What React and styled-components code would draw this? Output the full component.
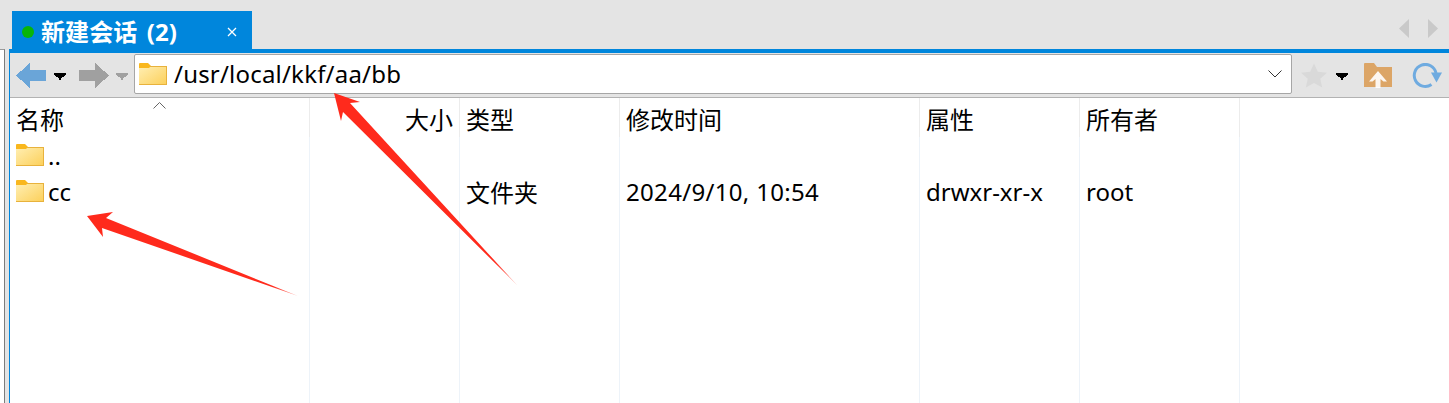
import React from 'react'
import styled, { createGlobalStyle } from 'styled-components'

const FONT = `"Noto Sans", "Noto Sans CJK SC", sans-serif`
const BLUE = '#0086dc'
const CHROME = '#e4e4e4'

const GlobalStyle = createGlobalStyle`
  html, body { margin: 0; padding: 0; background: #fff; }
  body { font-family: ${FONT}; color: #000; }
`

const Page = styled.div`
  position: relative;
  width: 1449px;
  height: 403px;
  overflow: hidden;
  display: flex;
  flex-direction: column;
`

const TabBar = styled.div`
  height: 49px;
  flex: none;
  background: ${CHROME};
  display: flex;
  align-items: flex-end;
  justify-content: space-between;
  padding-left: 12px;
  box-sizing: border-box;
`

const Tab = styled.div`
  width: 240px;
  height: 38px;
  background: ${BLUE};
  color: #fff;
  display: flex;
  align-items: center;
  box-sizing: border-box;
  padding: 4px 0 0 10px;
`

const StatusDot = styled.span`
  width: 12px;
  height: 12px;
  border-radius: 50%;
  background: #08b508;
  flex: none;
`

const TabTitle = styled.span`
  margin-left: 7px;
  font-size: 24px;
  font-weight: 700;
  line-height: 34px;
  word-spacing: 3px;
  letter-spacing: 0.1px;
  white-space: nowrap;
  flex: 1;
`

const TabClose = styled.svg`
  width: 10px;
  height: 10px;
  margin-right: 15px;
  flex: none;
`

const TabScroll = styled.div`
  display: flex;
  gap: 19px;
  padding: 0 11px 11px 0;
  filter: blur(0.4px);
`

const Body = styled.div`
  flex: 1;
  display: flex;
  min-height: 0;
`

const SidePane = styled.div`
  width: 4px;
  background: #fff;
  border-top: 1px solid #9a9a9a;
  border-right: 1px solid #7c7c7c;
  flex: none;
`

const Gutter = styled.div`
  width: 4px;
  background: ${CHROME};
  flex: none;
`

const Main = styled.div`
  flex: 1;
  display: flex;
  flex-direction: column;
  border-left: 1px solid ${BLUE};
  border-top: 4px solid ${BLUE};
  min-width: 0;
`

const Toolbar = styled.div`
  height: 45px;
  flex: none;
  box-sizing: border-box;
  background: ${CHROME};
  border-bottom: 1px solid #b2b2b2;
  display: flex;
  align-items: flex-start;
  padding: 1px 7px 0 6px;
`

const ToolIcon = styled.svg`
  flex: none;
  margin-left: ${(p) => p.$gap || 0}px;
  margin-top: ${(p) => p.$top || 0}px;
  filter: ${(p) => (p.$soft ? 'blur(0.5px)' : 'none')};
`

const AddressBox = styled.div`
  flex: 1;
  margin-left: 6px;
  height: 40px;
  box-sizing: border-box;
  background: #fff;
  border: 1px solid #a6a6a6;
  border-radius: 2px;
  display: flex;
  align-items: center;
  padding: 0 9px 0 4px;
`

const AddressText = styled.span`
  flex: 1;
  margin-left: 7px;
  font-size: 24px;
  letter-spacing: 0.2px;
  line-height: 38px;
  white-space: nowrap;
`

const FileList = styled.div`
  flex: 1;
  display: flex;
  background: #fff;
  min-height: 0;
`

const Column = styled.div`
  position: relative;
  width: ${(p) => p.$width}px;
  flex: none;
  box-sizing: border-box;
  border-right: 1px solid #edf3f9;
`

const HeaderCell = styled.div`
  height: 39px;
  box-sizing: border-box;
  margin-right: -1px;
  padding: 3px 6px 0;
  border-right: 1px solid #ececec;
  font-size: 24px;
  line-height: 38px;
  white-space: nowrap;
  text-align: ${(p) => (p.$right ? 'right' : 'left')};
`

const Cell = styled.div`
  height: 36px;
  box-sizing: border-box;
  padding: 0 6px;
  display: flex;
  align-items: center;
  gap: 4px;
  font-size: 24px;
  letter-spacing: ${(p) => p.$spacing || 0}px;
  white-space: nowrap;
`

const SortMark = styled.svg`
  position: absolute;
  left: 143px;
  top: 4px;
`

const Overlay = styled.svg`
  position: absolute;
  left: 0;
  top: 0;
  pointer-events: none;
`

let folderId = 0

function Folder({ $gap, $top }) {
  const id = `folder-${folderId++}`
  return (
    <ToolIcon $gap={$gap} $top={$top} width="28" height="22" viewBox="0 0 28 22">
      <defs>
        <linearGradient id={id} x1="0" y1="0" x2="1" y2="1">
          <stop offset="0" stopColor="#ffefb4" />
          <stop offset="1" stopColor="#fccf58" />
        </linearGradient>
      </defs>
      <path d="M1 0h8l3 3v2H0V1a1 1 0 0 1 1-1z" fill="#f9b71d" />
      <path d="M0 5l10 0 2-2h16v19H0z" fill={`url(#${id})`} />
      <path d="M11 3.5h17M0 21.5h28M27.5 3v19" stroke="#e8b23c" fill="none" />
    </ToolIcon>
  )
}

function Caret({ color, $gap, $top }) {
  return (
    <ToolIcon $gap={$gap} $top={$top} width="12" height="7" viewBox="0 0 12 7" shapeRendering="crispEdges">
      <path d="M0 0h12v2h-1v1h-1v1H8v1H7v2H5V5H4V4H2V3H1V2H0z" fill={color} />
    </ToolIcon>
  )
}

function ArrowHead({ color, flip, $gap }) {
  return (
    <ToolIcon $gap={$gap} $top={9} width="30" height="25" viewBox="0 0 30 25" shapeRendering="crispEdges">
      <path
        d={flip ? 'M0 7h16V0l14 12.5L16 25v-7H0z' : 'M30 7H14V0L0 12.5 14 25v-7h16z'}
        fill={color}
      />
    </ToolIcon>
  )
}

export default function App() {
  const columns = [
    { width: 300, title: '名称', sort: true, cells: [{ folder: true, text: '..' }, { folder: true, text: 'cc' }] },
    { width: 150, title: '大小', right: true, cells: [] },
    { width: 160, title: '类型', cells: [{ text: '' }, { text: '文件夹' }] },
    { width: 300, title: '修改时间', cells: [{ text: '' }, { text: '2024/9/10, 10:54', spacing: 0.32 }] },
    { width: 160, title: '属性', cells: [{ text: '' }, { text: 'drwxr-xr-x' }] },
    { width: 160, title: '所有者', cells: [{ text: '' }, { text: 'root' }] },
  ]

  return (
    <Page>
      <GlobalStyle />
      <TabBar>
        <Tab>
          <StatusDot />
          <TabTitle>新建会话 (2)</TabTitle>
          <TabClose viewBox="0 0 10 10">
            <path d="M1 1l8 8M9 1l-8 8" stroke="#fff" strokeWidth="1.3" />
          </TabClose>
        </Tab>
        <TabScroll>
          <svg width="10" height="19" viewBox="0 0 10 19">
            <path d="M10 0v19L0 9.5z" fill="#c9c9c9" />
          </svg>
          <svg width="10" height="19" viewBox="0 0 10 19">
            <path d="M0 0v19l10-9.5z" fill="#c9c9c9" />
          </svg>
        </TabScroll>
      </TabBar>
      <Body>
        <SidePane />
        <Gutter />
        <Main>
          <Toolbar>
            <ArrowHead color="#6aa5d8" />
            <Caret color="#000" $gap={8} $top={19} />
            <ArrowHead color="#a0a0a0" flip $gap={13} />
            <Caret color="#a0a0a0" $gap={7} $top={19} />
            <AddressBox>
              <Folder />
              <AddressText>/usr/local/kkf/aa/bb</AddressText>
              <svg width="14" height="8" viewBox="0 0 14 8">
                <path d="M.5.5L7 7l6.5-6.5" stroke="#333" fill="none" />
              </svg>
            </AddressBox>
            <ToolIcon $soft $gap={9} $top={9} width="26" height="25" viewBox="0 0 27 25">
              <path d="M13.5 0l4 8.6 9.5 1-7 6.3 2 9.1-8.500-4.800L5 25l2-9.100-7-6.300 9.500-1z" fill="#d9d9d9" />
            </ToolIcon>
            <Caret color="#000" $gap={9} $top={19} />
            <ToolIcon $soft $gap={16} $top={9} width="28" height="25" viewBox="0 0 28 25">
              <path d="M0 1a1 1 0 0 1 1-1h9l3 4h15v20H0z" fill="#dca566" />
              <path d="M14 8l9 10.500h-3.500L16.500 16v9h-5v-9l-3 2.500H5z" fill="#fff" fillOpacity=".9" />
            </ToolIcon>
            <ToolIcon $soft $gap={20} $top={9} width="30" height="25" viewBox="0 0 30 25">
              <path d="M24 10A11 11 0 1 0 19.500 21.500" stroke="#6fabe0" strokeWidth="3" fill="none" />
              <path d="M19 9.500h11l-5.500 10z" fill="#6fabe0" />
            </ToolIcon>
          </Toolbar>
          <FileList>
            {columns.map((col) => (
              <Column key={col.title} $width={col.width}>
                <HeaderCell $right={col.right}>{col.title}</HeaderCell>
                {col.sort && (
                  <SortMark width="13" height="7" viewBox="0 0 13 7">
                    <path d="M.5 6.500l6-6 6 6" stroke="#666" fill="none" />
                  </SortMark>
                )}
                {col.cells.map((cell, i) => (
                  <Cell key={i} $spacing={cell.spacing}>
                    {cell.folder && <Folder />}
                    <span>{cell.text}</span>
                  </Cell>
                ))}
              </Column>
            ))}
          </FileList>
        </Main>
      </Body>
      <Overlay width="1449" height="403" viewBox="0 0 1449 403">
        <defs>
          <linearGradient id="arrow-left" gradientUnits="userSpaceOnUse" x1="87" y1="216" x2="298" y2="296">
            <stop offset="0" stopColor="#ff2a1c" />
            <stop offset=".88" stopColor="#ff2a1c" />
            <stop offset="1" stopColor="#ffa098" />
          </linearGradient>
          <linearGradient id="arrow-up" gradientUnits="userSpaceOnUse" x1="334" y1="93" x2="517" y2="285">
            <stop offset="0" stopColor="#ff2a1c" />
            <stop offset=".88" stopColor="#ff2a1c" />
            <stop offset="1" stopColor="#ffa098" />
          </linearGradient>
        </defs>
        <polygon points="87,216 113,212 106,218 298,296 102,228 103,237" fill="url(#arrow-left)" />
        <polygon points="334,93 360,102 350,103 517,285 343,112 341,121" fill="url(#arrow-up)" />
      </Overlay>
    </Page>
  )
}
